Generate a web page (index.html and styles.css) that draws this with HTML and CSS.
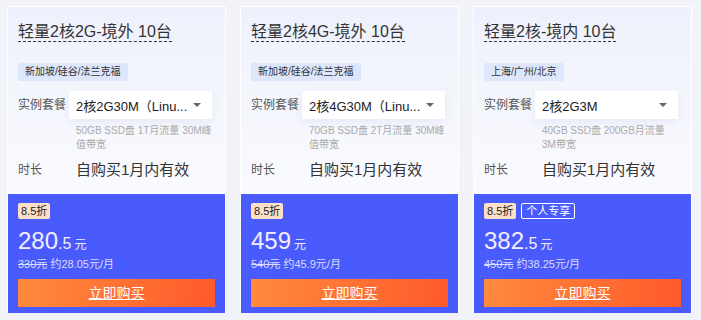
FILE: index.html
```html
<!DOCTYPE html>
<html lang="zh-CN">
<head>
<meta charset="UTF-8">
<meta name="viewport" content="width=device-width, initial-scale=1.0">
<title>轻量服务器</title>
<link rel="stylesheet" href="styles.css">
</head>
<body>
<div class="list">

    <div class="card">
        <div class="card-top">
            <div class="title"><span>轻量2核2G-境外 10台</span></div>
            <div class="region">新加坡/硅谷/法兰克福</div>
            <div class="row">
                <span class="label">实例套餐</span>
                <div class="select"><span>2核2G30M（Linu...</span><i class="caret"></i></div>
            </div>
            <div class="desc">50GB SSD盘 1T月流量 30M峰值带宽</div>
            <div class="row row-time">
                <span class="label">时长</span>
                <span class="value">自购买1月内有效</span>
            </div>
        </div>
        <div class="card-bottom">
            <div class="tags"><span class="tag-off">8.5折</span></div>
            <div class="price"><b>280</b><em>.5</em><small>元</small></div>
            <div class="old"><s>330元</s> 约28.05元/月</div>
            <a class="buy" href="#">立即购买</a>
        </div>
    </div>

    <div class="card">
        <div class="card-top">
            <div class="title"><span>轻量2核4G-境外 10台</span></div>
            <div class="region">新加坡/硅谷/法兰克福</div>
            <div class="row">
                <span class="label">实例套餐</span>
                <div class="select"><span>2核4G30M（Linu...</span><i class="caret"></i></div>
            </div>
            <div class="desc">70GB SSD盘 2T月流量 30M峰值带宽</div>
            <div class="row row-time">
                <span class="label">时长</span>
                <span class="value">自购买1月内有效</span>
            </div>
        </div>
        <div class="card-bottom">
            <div class="tags"><span class="tag-off">8.5折</span></div>
            <div class="price"><b>459</b><small>元</small></div>
            <div class="old"><s>540元</s> 约45.9元/月</div>
            <a class="buy" href="#">立即购买</a>
        </div>
    </div>

    <div class="card">
        <div class="card-top">
            <div class="title"><span>轻量2核-境内 10台</span></div>
            <div class="region">上海/广州/北京</div>
            <div class="row">
                <span class="label">实例套餐</span>
                <div class="select"><span>2核2G3M</span><i class="caret"></i></div>
            </div>
            <div class="desc">40GB SSD盘 200GB月流量 3M带宽</div>
            <div class="row row-time">
                <span class="label">时长</span>
                <span class="value">自购买1月内有效</span>
            </div>
        </div>
        <div class="card-bottom">
            <div class="tags"><span class="tag-off">8.5折</span><span class="tag-own">个人专享</span></div>
            <div class="price"><b>382</b><em>.5</em><small>元</small></div>
            <div class="old"><s>450元</s> 约38.25元/月</div>
            <a class="buy" href="#">立即购买</a>
        </div>
    </div>

</div>
</body>
</html>
```

FILE: styles.css
```css
body{
margin: 0;
background: #f1f3f9;
font-family: "Liberation Sans", "Noto Sans CJK SC", sans-serif;
color: #333;
}

.list{
display: flex;
gap: 14px;
padding: 6px 7px;
}

.card{
width: 219px;
height: 307px;
box-sizing: border-box;
border: 1px solid #fff;
border-bottom: none;
display: flex;
flex-direction: column;
background: linear-gradient(180deg, #eef1fc 0%, #f8f9fe 50%, #fff 100%);
}

.card-top{
flex: 1;
padding: 15px 10px 0 10px;
}

.title{
height: 22px;
}

.title span{
display: inline-block;
font-size: 16px;
line-height: 19px;
color: #333;
border-bottom: 1px dashed #333;
}

.region{
display: inline-block;
margin-top: 19px;
height: 18px;
line-height: 18px;
padding: 0 7px;
font-size: 10px;
color: #333;
background: #dde6fb;
border-radius: 2px;
}

.row{
display: flex;
align-items: center;
margin-top: 10px;
}

.label{
flex-shrink: 0;
width: 51px;
font-size: 12px;
line-height: 18px;
white-space: nowrap;
color: #555;
}

.select{
flex-shrink: 0;
width: 143px;
height: 28px;
box-sizing: border-box;
padding: 0 11px 0 7px;
display: flex;
align-items: center;
justify-content: space-between;
background: #fff;
box-shadow: 0 3px 10px rgba(40, 60, 140, 0.08);
font-size: 13px;
white-space: nowrap;
color: #222;
}

.caret{
width: 0;
height: 0;
border-left: 4px solid transparent;
border-right: 4px solid transparent;
border-top: 4px solid #666;
}

.desc{
margin: 5px 0 0 58px;
width: 137px;
height: 28px;
font-size: 10px;
line-height: 14px;
color: #aaa;
}

.row-time{
margin-top: 8px;
}

.value{
margin-left: 7px;
font-size: 15px;
line-height: 20px;
color: #333;
}

.card-bottom{
height: 119px;
box-sizing: border-box;
padding: 9px 10px 0 10px;
background: #4a5bfd;
}

.tags{
display: flex;
gap: 5px;
}

.tag-off{
height: 16px;
line-height: 16px;
padding: 0 3px;
font-size: 11px;
color: #222;
background: #fde0c8;
border-radius: 2px;
}

.tag-own{
height: 16px;
line-height: 14px;
box-sizing: border-box;
padding: 0 4px;
font-size: 11px;
color: #fff;
border: 1px solid #fff;
border-radius: 2px;
}

.price{
margin-top: 6px;
height: 32px;
line-height: 32px;
color: #f3eefe;
white-space: nowrap;
}

.price b{
font-weight: normal;
font-size: 24px;
}

.price em{
font-style: normal;
font-size: 16px;
}

.price small{
margin-left: 3px;
font-size: 12px;
}

.old{
font-size: 11px;
line-height: 14px;
color: #dcdcff;
}

.buy{
display: block;
margin-top: 8px;
height: 28px;
line-height: 28px;
text-align: center;
font-size: 14px;
color: #fff;
background: linear-gradient(100deg, #ff8a3d 0%, #ff5a2a 100%);
}
```
